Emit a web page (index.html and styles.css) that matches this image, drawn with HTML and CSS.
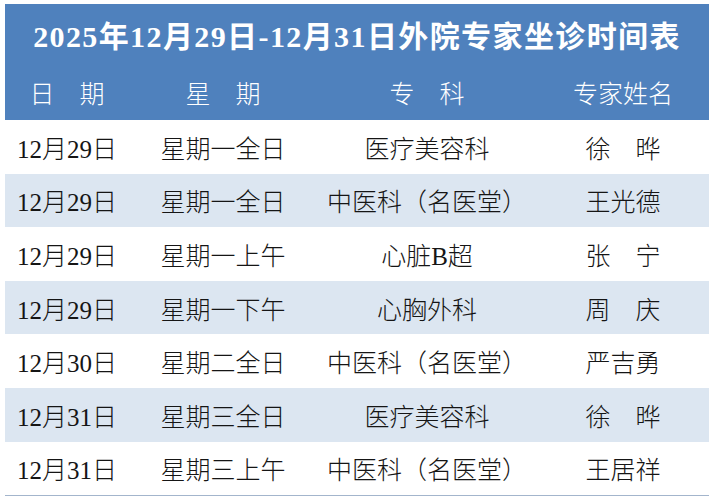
FILE: index.html
```html
<!DOCTYPE html>
<html lang="zh-CN">
<head>
<meta charset="utf-8">
<title>外院专家坐诊时间表</title>
<link rel="stylesheet" href="styles.css">
</head>
<body>
<table class="schedule">
  <colgroup>
    <col class="c-date"><col class="c-week"><col class="c-dept"><col class="c-name">
  </colgroup>
  <thead>
    <tr class="title-row"><th colspan="4" class="title">2025年12月29日-12月31日外院专家坐诊时间表</th></tr>
    <tr class="head-row">
      <th>日　期</th><th>星　期</th><th>专　科</th><th>专家姓名</th>
    </tr>
  </thead>
  <tbody>
    <tr><td>12月29日</td><td>星期一全日</td><td>医疗美容科</td><td>徐　晔</td></tr>
    <tr class="alt"><td>12月29日</td><td>星期一全日</td><td>中医科（名医堂）</td><td>王光德</td></tr>
    <tr><td>12月29日</td><td>星期一上午</td><td>心脏B超</td><td>张　宁</td></tr>
    <tr class="alt"><td>12月29日</td><td>星期一下午</td><td>心胸外科</td><td>周　庆</td></tr>
    <tr><td>12月30日</td><td>星期二全日</td><td>中医科（名医堂）</td><td>严吉勇</td></tr>
    <tr class="alt"><td>12月31日</td><td>星期三全日</td><td>医疗美容科</td><td>徐　晔</td></tr>
    <tr class="last"><td>12月31日</td><td>星期三上午</td><td>中医科（名医堂）</td><td>王居祥</td></tr>
  </tbody>
</table>
</body>
</html>
```

FILE: styles.css
```css
html, body {
  margin: 0;
  padding: 0;
  background: #ffffff;
}
body {
  padding: 4px 0 0 5px;
}
.schedule {
  width: 704px;
  table-layout: fixed;
  border-collapse: collapse;
  font-family: "Liberation Serif", "Noto Sans CJK SC", serif;
  color: #151515;
}
.c-date { width: 124px; }
.c-week { width: 188px; }
.c-dept { width: 220px; }
.c-name { width: 172px; }

.schedule th, .schedule td {
  padding: 0;
  text-align: center;
  white-space: nowrap;
}
.schedule thead th {
  background: #4f81bd;
  color: #ffffff;
}
.title-row th {
  height: 58px;
  font-size: 30px;
  font-weight: bold;
  letter-spacing: 1.4px;
  padding-top: 1px;
}
.head-row th {
  height: 57px;
  font-family: "Noto Sans CJK SC", sans-serif;
  font-weight: 300;
  font-size: 25px;
  vertical-align: middle;
}
.schedule tbody td {
  height: 53.6px;
  font-size: 25px;
  font-weight: 300;
}
.schedule tbody tr.alt td {
  background: #dce6f1;
}
.schedule tbody tr.last td {
  border-bottom: 1px solid #a3b5cc;
}
```
